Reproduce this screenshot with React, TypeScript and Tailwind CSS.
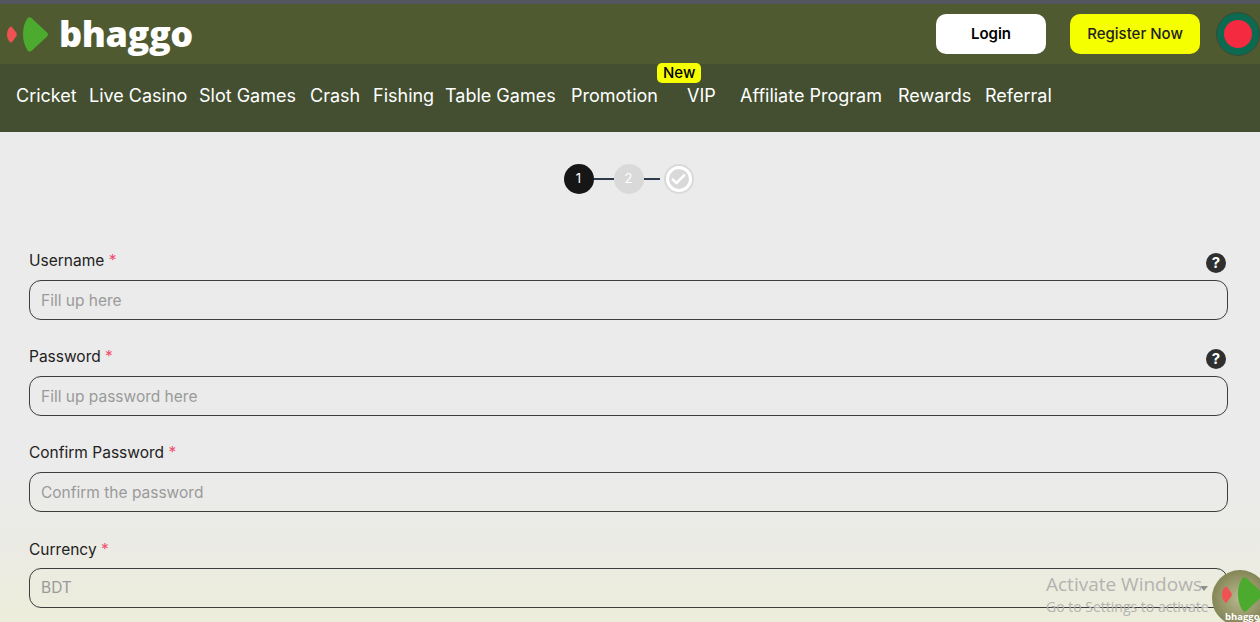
import { Check } from 'lucide-react'

const navItems = [
  { label: 'Cricket', width: 'w-[73px]' },
  { label: 'Live Casino', width: 'w-[110px]' },
  { label: 'Slot Games', width: 'w-[111px]' },
  { label: 'Crash', width: 'w-[63px]' },
  { label: 'Fishing', width: 'w-[72px]' },
  { label: 'Table Games', width: 'w-[126px]' },
  { label: 'Promotion', width: 'w-[116px]' },
  { label: 'VIP', width: 'w-[53px]' },
  { label: 'Affiliate Program', width: 'w-[158px]' },
  { label: 'Rewards', width: 'w-[87px]' },
  { label: 'Referral', width: 'w-[80px]' },
]

const fields = [
  { label: 'Username', placeholder: 'Fill up here', help: true },
  { label: 'Password', placeholder: 'Fill up password here', help: true },
  { label: 'Confirm Password', placeholder: 'Confirm the password', help: false },
]

const Logo = ({ className = 'w-[44px] h-[37px]' }: { className?: string }) => (
  <svg viewBox="0 0 44 37" className={className}>
    <path d="M4 11Q5 10 6 11L10.500 17Q11 18.500 10.500 20L6 26Q5 27 4 26Q1 23 1 18.500Q1 14 4 11z" fill="#ee5253" />
    <path d="M22 1.500Q24 .5 26 2.500L41 16.500Q43 18.500 41 20.500L26 34.500Q24 36.500 22 35Q17 28 17 18Q17 8 22 1.500z" fill="#4caa2f" />
  </svg>
)

const Field = ({ label, placeholder, help }: { label: string; placeholder: string; help: boolean }) => (
  <div className="h-[96px]">
    <div className="flex h-[31px] items-start justify-between">
      <label className="text-[15.5px] leading-[24px] text-[#222222]">
        {label} <span className="text-[#f0506e]">*</span>
      </label>
      {help && (
        <span className="mt-[4px] mr-[2px] flex h-[20px] w-[20px] items-center justify-center rounded-full bg-[#2f2f2f] text-[15px] font-bold text-white">
          ?
        </span>
      )}
    </div>
    <input
      placeholder={placeholder}
      className="h-[40px] w-full rounded-[12px] border border-[#3d3d3d] bg-transparent px-[11px] text-[15.5px] placeholder:text-[#9a9a9a]"
    />
  </div>
)

export default function App() {
  return (
    <div className="relative h-[622px] overflow-hidden bg-[linear-gradient(180deg,#ebebeb_0%,#ebebeb_76%,#ebebe6_86%,#ecedda_100%)] font-['Inter',sans-serif]">
      <div className="h-[4px] bg-[#55555f]" />
      <header className="flex h-[60px] items-center justify-between bg-[#4f5a30]">
        <div className="flex items-center">
          <Logo className="ml-[6px] h-[37px] w-[44px]" />
          <span className="ml-[9px] font-['Open_Sans',sans-serif] text-[36px] leading-none font-extrabold tracking-[-0.4px] text-white">
            bhaggo
          </span>
        </div>
        <div className="flex items-center">
          <button className="h-[40px] w-[110px] rounded-[10px] bg-white pt-[1px] text-[15px] font-semibold text-black">Login</button>
          <button className="ml-[24px] h-[40px] w-[130px] rounded-[10px] bg-[#f6ff00] pt-[1px] text-[15px] font-medium text-[#222222]">
            Register Now
          </button>
          <span className="ml-[16px] flex h-[44px] w-[44px] items-center justify-center rounded-full border border-[#3d4a38] bg-[#0b6a4f]">
            <span className="h-[28px] w-[28px] rounded-full bg-[#f42a41]" />
          </span>
        </div>
      </header>
      <nav className="flex h-[68px] items-center bg-[#434f30] pb-[6px] pl-[16px]">
        {navItems.map(item => (
          <a key={item.label} className={`relative shrink-0 text-[18px] whitespace-nowrap text-white ${item.width}`}>
            {item.label}
            {item.label === 'VIP' && (
              <span className="absolute top-[-19px] left-[-30px] rounded-[5px] bg-[#f6ff00] px-[6px] text-[15px] leading-[20px] font-medium text-black">
                New
              </span>
            )}
          </a>
        ))}
      </nav>

      {/* Steps */}
      <div className="mt-[32px] flex items-center justify-center pr-[3px]">
        <span className="flex h-[30px] w-[30px] items-center justify-center rounded-full bg-[#161616] text-[13px] text-white">1</span>
        <span className="h-[2px] w-[20px] bg-[#2f3b4c]" />
        <span className="flex h-[30px] w-[30px] items-center justify-center rounded-full bg-[#d9d9d9] text-[13px] text-white">2</span>
        <span className="h-[2px] w-[16px] bg-[#2f3b4c]" />
        <span className="ml-[4px] flex h-[30px] w-[30px] items-center justify-center rounded-full bg-[#d9d9d9]">
          <span className="flex h-[26px] w-[26px] items-center justify-center rounded-full border-[3px] border-white">
            <Check className="h-[17px] w-[17px] text-white" strokeWidth={3.5} />
          </span>
        </span>
      </div>

      <form className="mt-[55px] pr-[32px] pl-[29px]">
        {fields.map(f => (
          <Field key={f.label} {...f} />
        ))}
        <div className="h-[96px]">
          <div className="h-[31px]">
            <label className="text-[15.5px] leading-[24px] text-[#222222]">
              Currency <span className="text-[#f0506e]">*</span>
            </label>
          </div>
          <div className="flex h-[40px] items-center justify-between rounded-[12px] border border-[#3d3d3d] pr-[19px] pl-[11px] text-[15.5px] text-[#9a9a9a]">
            BDT
            <svg viewBox="0 0 8 5" className="h-[5px] w-[8px]">
              <path d="M0 0h8L4 5z" fill="#8f8f8f" />
            </svg>
          </div>
        </div>
      </form>

      {/* Windows watermark */}
      <div className="pointer-events-none absolute top-[572px] left-[1046px] font-['Open_Sans',sans-serif] whitespace-nowrap text-[#b3b3b0]">
        <div className="text-[19px] leading-[24px]">Activate Windows</div>
        <div className="text-[14px] leading-[22px]">Go to Settings to activate Windows.</div>
      </div>

      {/* Floating badge */}
      <div className="absolute top-[570px] left-[1212px] h-[56px] w-[56px] overflow-hidden rounded-full bg-[radial-gradient(circle,#b9b98f_0%,#6f7040_100%)]">
        <Logo className="absolute top-[6px] left-[9px] h-[37px] w-[44px]" />
        <span className="absolute top-[40px] left-[13px] font-['Open_Sans',sans-serif] text-[9.5px] leading-[14px] font-bold text-white">bhaggo</span>
      </div>
    </div>
  )
}
